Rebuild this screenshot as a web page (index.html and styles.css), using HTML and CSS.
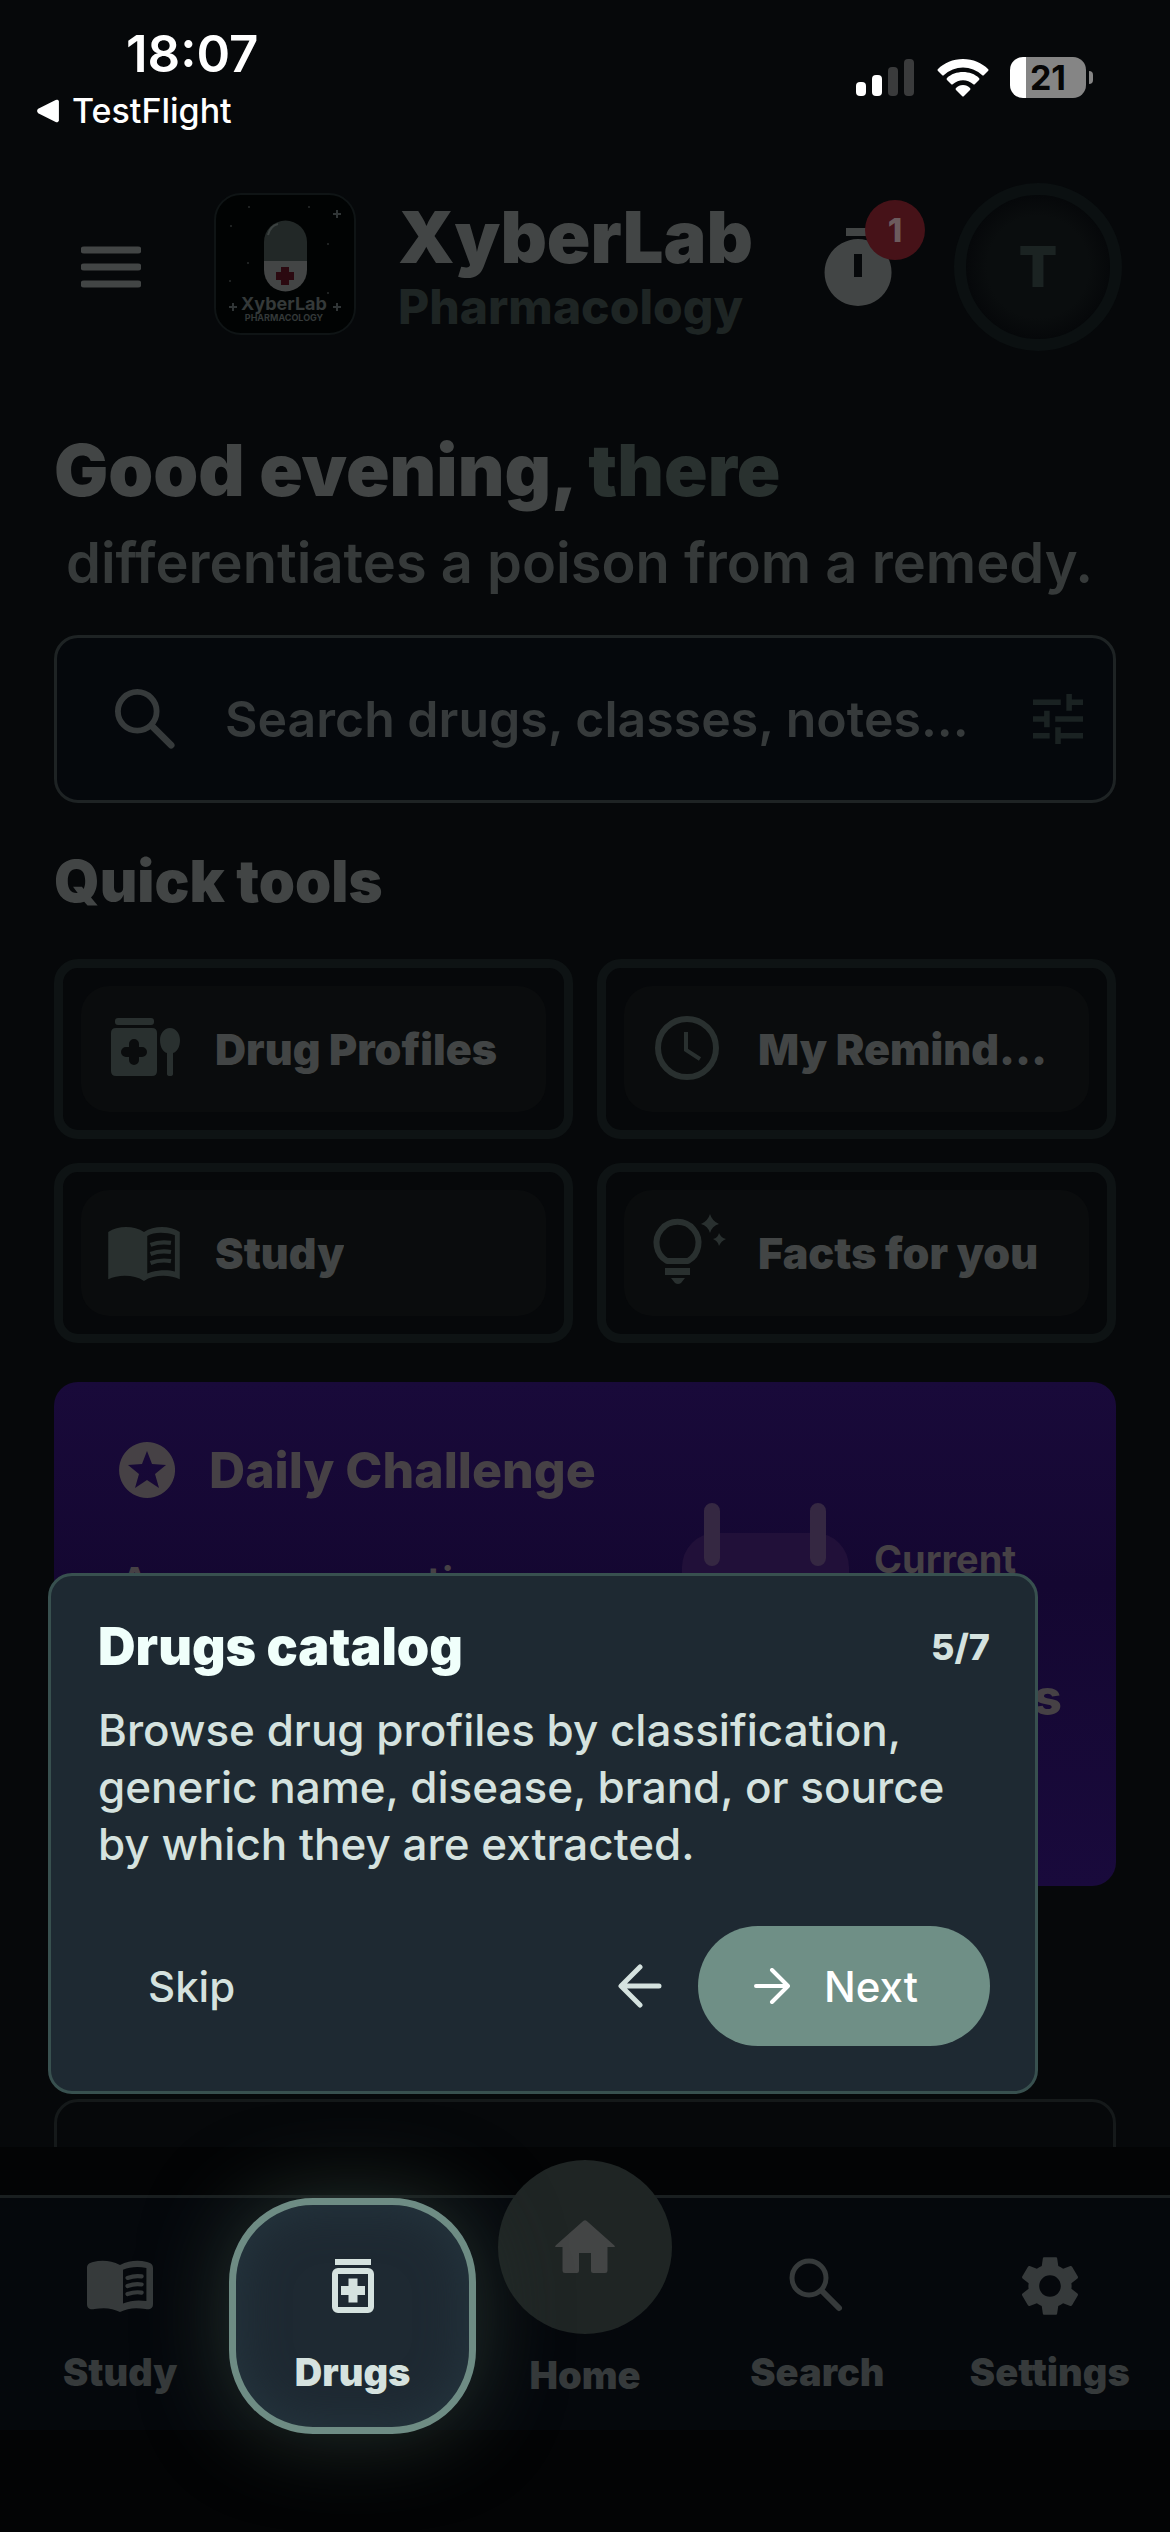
FILE: index.html
```html
<!DOCTYPE html>
<html lang="en">
<head>
  <meta charset="UTF-8">
  <meta name="viewport" content="width=device-width, initial-scale=1.0">
  <title>XyberLab Pharmacology</title>
  <link rel="stylesheet" href="styles.css">
</head>
<body>
  <div class="status-bar">
    <div class="status-left">
      <span class="clock">18:07</span>
      <a href="#" class="back-app">
        <svg width="24" height="24" viewBox="0 0 22 22"><path d="M21 2v18a2 2 0 0 1-3 1L2 13q-2-2 0-4L18 1a2 2 0 0 1 3 1z" fill="currentColor"/></svg>
        TestFlight
      </a>
    </div>
    <div class="status-right">
      <svg width="60" height="38" viewBox="0 0 60 38">
        <rect x="0" y="23" width="10" height="14" rx="4" fill="#fff"/>
        <rect x="16" y="16" width="10" height="21" rx="4" fill="#fff"/>
        <rect x="32" y="8" width="10" height="29" rx="4" fill="#3a3b3c"/>
        <rect x="48" y="0" width="10" height="37" rx="4" fill="#3a3b3c"/>
      </svg>
      <svg width="52" height="38" viewBox="0 0 52 38" fill="#fff">
        <path d="M26 0C16 0 7 4 1 10q-1 1 0 2l4 4q1 1 2 0a28 28 0 0 1 38 0q1 1 2 0l4-4q1-1 0-2C45 4 36 0 26 0z"/>
        <path d="M26 13c-6 0-12 2-16 6q-1 1 0 2l4 4q1 1 2 0a15 15 0 0 1 20 0q1 1 2 0l4-4q1-1 0-2c-4-4-10-6-16-6z"/>
        <path d="M26 26c-3 0-5 1-7 3q-1 1 0 2l6 6q1 1 2 0l6-6q1-1 0-2c-2-2-4-3-7-3z"/>
      </svg>
      <div class="battery"><span>21</span></div>
    </div>
  </div>

  <header class="app-bar">
    <button class="menu-btn" aria-label="Menu">
      <svg width="60" height="42" viewBox="0 0 60 42"><path d="M3 4h54M3 21h54M3 38h54" stroke="currentColor" stroke-width="7" stroke-linecap="round"/></svg>
    </button>
    <svg class="logo" width="142" height="142" viewBox="0 0 142 142">
      <rect x="1" y="1" width="140" height="140" rx="26" fill="#010303" stroke="#0f1415" stroke-width="2"/>
      <path d="M50 68V49a21 21 0 0 1 43 0v19z" fill="#222827"/>
      <path d="M50 68h43v9a21 21 0 0 1-43 0z" fill="#434545"/>
      <path d="M54 42q2-9 10-11" stroke="#3c4241" stroke-width="2" fill="none"/>
      <path d="M67 74h8v5h5v8h-5v5h-8v-5h-5v-8h5z" fill="#2b0910"/>
      <path d="M123 17v8M119 21h8M19 110v8M15 114h8M123 110v8M119 114h8" stroke="#303536" stroke-width="2"/>
      <g fill="#282c2c"><circle cx="35" cy="14" r="1"/><circle cx="95" cy="14" r="1"/><circle cx="17" cy="33" r="1"/><circle cx="114" cy="51" r="1"/><circle cx="34" cy="70" r="1"/><circle cx="16" cy="88" r="1"/><circle cx="114" cy="100" r="1"/></g>
      <text class="logo-name" x="70" y="117">XyberLab</text>
      <text class="logo-sub" x="70" y="128">PHARMACOLOGY</text>
    </svg>
    <div class="brand">
      <span class="brand-name">XyberLab</span>
      <span class="brand-sub">Pharmacology</span>
    </div>
    <button class="timer-btn" aria-label="Reminders">
      <svg width="68" height="80" viewBox="0 0 68 80"><path d="M22 1h24v8H22z" fill="currentColor"/><path fill-rule="evenodd" d="M34 12a33.500 33.500 0 1 0 .1 0zM30 27h8v23h-8z" fill="currentColor"/></svg>
      <span class="badge">1</span>
    </button>
    <button class="avatar">T</button>
  </header>

  <main>
    <h1>Good evening, <span>there</span></h1>
    <p class="quote">differentiates a poison from a remedy.</p>

    <div class="search-box">
      <svg width="60" height="60" viewBox="0 0 62 62"><circle cx="23" cy="23" r="20" fill="none" stroke="currentColor" stroke-width="6"/><path d="M38 38l20 20" stroke="currentColor" stroke-width="7" stroke-linecap="round"/></svg>
      <input type="text" placeholder="Search drugs, classes, notes..." aria-label="Search drugs, classes, notes">
      <button class="filter-btn" aria-label="Filters">
        <svg width="50" height="50" viewBox="3 3 18 18"><path fill="currentColor" d="M3 17v2h6v-2H3zM3 5v2h10V5H3zm10 16v-2h8v-2h-8v-2h-2v6h2zM7 9v2H3v2h4v2h2V9H7zm14 4v-2H11v2h10zm-6-4h2V7h4V5h-4V3h-2v6z"/></svg>
      </button>
    </div>

    <h2>Quick tools</h2>
    <div class="tools">
      <button class="tool"><span class="tool-inner">
        <svg width="78" height="78" viewBox="0 0 78 78"><rect x="10" y="8" width="39" height="7" rx="3" fill="currentColor"/><path fill="currentColor" d="M11 18h36q5 0 5 5v38q0 5-5 5H11q-5 0-5-5V23q0-5 5-5z"/><path d="M29 34v16M21 42h16" stroke="#0a0c0d" stroke-width="10" stroke-linecap="round"/><path fill="currentColor" d="M65 18c6 0 10 6 10 12 0 7-3 12-7 13v21q0 2-3 2t-3-2V43c-4-1-7-6-7-13 0-6 4-12 10-12z"/></svg>
        <span class="tool-label">Drug Profiles</span>
      </span></button>
      <button class="tool"><span class="tool-inner">
        <svg width="78" height="78" viewBox="0 0 78 78" fill="none" stroke="currentColor"><circle cx="39" cy="38" r="29" stroke-width="6"/><path d="M38 22v18l14 9" stroke-width="4"/></svg>
        <span class="tool-label">My Reminders</span>
      </span></button>
      <button class="tool"><span class="tool-inner">
        <svg width="78" height="78" viewBox="0 0 24 24"><path fill="currentColor" fill-rule="evenodd" d="M1 5.500C4 3.500 9 3.500 12 5.500c3-2 8-2 11 0v14.600c-3-1.500-8-1.500-11 .5-3-2-8-2-11-.5zM21.500 6.500c-3-1-6.500-1-8.500.3v11.500c2.500-1 6-1.300 8.500-.6z"/><path d="M14 9.500c2-.8 4-1 6.300-.6M14 12.300c2-.8 4-1 6.300-.6M14 15.100c2-.8 4-1 6.300-.6" fill="none" stroke="currentColor" stroke-width="1.300"/></svg>
        <span class="tool-label">Study</span>
      </span></button>
      <button class="tool"><span class="tool-inner">
        <svg width="78" height="78" viewBox="0 0 78 78"><path d="M19 47a21 21 0 1 1 21 0z" fill="none" stroke="currentColor" stroke-width="6" stroke-linejoin="round"/><path fill="currentColor" d="M17 54h25v7H17zM23 64h14l-4 5q-3 2-6 0zM62 0q2 7 9 10-7 2-9 9-2-7-9-9 7-3 9-10zM71 19q2 5 7 6-5 2-7 7-1-5-6-7 5-1 6-6z"/></svg>
        <span class="tool-label">Facts for you</span>
      </span></button>
    </div>

    <section class="challenge">
      <div class="challenge-info">
        <h3>
          <svg width="56" height="56" viewBox="0 0 56 56"><path fill="currentColor" fill-rule="evenodd" d="M28 0a28 28 0 1 0 .1 0zM28 9l5 13 14 1-11 9 4 14-12-8-12 8 4-14-11-9 14-1z"/></svg>
          Daily Challenge
        </h3>
        <p>Answer a question</p>
      </div>
      <svg class="calendar" width="168" height="200" viewBox="0 0 168 200"><rect x="0" y="30" width="167" height="160" rx="34" fill="#211039"/><path d="M30 8v47M136 8v47" stroke="#352842" stroke-width="16" stroke-linecap="round"/></svg>
      <div class="streak">
        <span>Current</span>
        <strong>0 days</strong>
      </div>
    </section>
    <section class="next-card"></section>
  </main>

  <nav class="tab-bar">
    <a href="#" class="tab">
      <svg width="72" height="72" viewBox="0 0 24 24"><path fill="currentColor" fill-rule="evenodd" d="M3 4c3-.7 6-.5 9 1 3-1.500 6-1.700 9-1 1.500.3 2 1 2 2v12c0 1.500-1 2-2.500 1.700-3-.6-6-.4-8.500 1-2.500-1.400-5.500-1.600-8.500-1C2 20 1 19.500 1 18V6c0-1 .5-1.700 2-2zM20.800 6c-3-.6-5.500-.3-7.800.6v11.200c2.500-1 5-1.200 7.800-.8z"/><path d="M14.500 9.300c1.700-.6 3-.8 4.700-.5M14.500 12c1.700-.6 3-.8 4.700-.5M14.500 14.700c1.700-.6 3-.8 4.700-.5" fill="none" stroke="currentColor" stroke-width="1.400" stroke-linecap="round"/></svg>
      <span>Study</span>
    </a>
    <a href="#" class="tab active">
      <svg width="72" height="72" viewBox="0 0 24 24"><path fill="currentColor" fill-rule="evenodd" d="M6 3h12v2H6zM7 6h10a2 2 0 0 1 2 2v11a2 2 0 0 1-2 2H7a2 2 0 0 1-2-2V8a2 2 0 0 1 2-2zm0 2v11h10V8zM10.500 9.500h3v2.500H16v3h-2.500v2.500h-3V15H8v-3h2.500z"/></svg>
      <span>Drugs</span>
    </a>
    <a href="#" class="tab home">
      <span class="home-circle">
        <svg width="72" height="72" viewBox="0 0 24 24"><path fill="currentColor" d="M10 20v-6h4v6q0 .7.700.7h4q.8 0 .8-.8V12h2.200q.5 0 0-.6L12.600 3.300q-.6-.5-1.200 0L2.300 11.400q-.5.6 0 .6h2.200v7.900q0 .8.800.8h4q.7 0 .7-.7z"/></svg>
      </span>
      <span>Home</span>
    </a>
    <a href="#" class="tab">
      <svg width="72" height="72" viewBox="0 0 72 72"><circle cx="28" cy="28" r="17" fill="none" stroke="currentColor" stroke-width="5"/><path d="M41 41l17 17" stroke="currentColor" stroke-width="6" stroke-linecap="round"/></svg>
      <span>Search</span>
    </a>
    <a href="#" class="tab">
      <svg width="72" height="72" viewBox="0 0 24 24"><path fill="currentColor" d="M19.140 12.940c.04-.3.060-.61.060-.94 0-.32-.02-.64-.07-.94l2.030-1.580c.18-.14.230-.41.120-.61l-1.920-3.320c-.12-.22-.37-.29-.59-.22l-2.390.960c-.5-.38-1.030-.7-1.620-.94l-.36-2.540c-.04-.24-.24-.41-.48-.41h-3.840c-.24 0-.43.170-.47.410l-.36 2.540c-.59.240-1.130.570-1.620.94l-2.390-.96c-.22-.08-.47 0-.59.220L2.740 8.870c-.12.210-.08.470.120.610l2.030 1.580c-.05.3-.09.630-.09.940s.02.640.070.940l-2.030 1.580c-.18.140-.23.410-.12.610l1.920 3.320c.12.220.37.290.59.220l2.390-.96c.5.380 1.030.7 1.620.94l.36 2.540c.05.240.24.410.48.410h3.840c.24 0 .44-.17.470-.41l.36-2.540c.59-.24 1.130-.56 1.620-.94l2.390.960c.22.080.47 0 .59-.22l1.920-3.320c.12-.22.070-.47-.12-.61l-2.010-1.580zM12 15.600c-1.980 0-3.600-1.620-3.600-3.600s1.620-3.600 3.600-3.600 3.600 1.620 3.600 3.600-1.620 3.600-3.600 3.600z"/></svg>
      <span>Settings</span>
    </a>
  </nav>

  <!-- guided tour step -->
  <div class="tour" role="dialog" aria-labelledby="tourTitle">
    <div class="tour-head">
      <h4 id="tourTitle">Drugs catalog</h4>
      <span class="tour-step">5/7</span>
    </div>
    <p>Browse drug profiles by classification, generic name, disease, brand, or source by which they are extracted.</p>
    <div class="tour-actions">
      <button class="skip-btn">Skip</button>
      <button class="prev-btn" aria-label="Previous">
        <svg width="44" height="44" viewBox="0 0 44 44"><path d="M41 22H4M22 3L3 22l19 19" fill="none" stroke="currentColor" stroke-width="5" stroke-linecap="round" stroke-linejoin="round"/></svg>
      </button>
      <button class="next-btn">
        <svg width="36" height="36" viewBox="0 0 36 36"><path d="M2 18h31M18 2l16 16-16 16" fill="none" stroke="currentColor" stroke-width="4" stroke-linecap="round" stroke-linejoin="round"/></svg>
        Next
      </button>
    </div>
  </div>
</body>
</html>
```
FILE: styles.css
```css
* {
  box-sizing: border-box;
}

body {
  margin: 0;
  min-height: 100vh;
  background: #06080a;
  color: #424545;
  font-family: Inter, "Liberation Sans", sans-serif;
  display: flex;
  flex-direction: column;
  position: relative;
  overflow-x: hidden;
}

h1, h2, h3, h4, p {
  margin: 0;
}

button {
  font: inherit;
  color: inherit;
  background: none;
  border: 0;
  padding: 0;
}

a {
  color: inherit;
  text-decoration: none;
}

svg {
  display: block;
  flex-shrink: 0;
}

/* Status bar */
.status-bar {
  display: flex;
  justify-content: space-between;
  align-items: flex-start;
  height: 156px;
  padding: 24px 84px 0 36px;
  color: #fff;
}

.status-left {
  display: flex;
  flex-direction: column;
}

.clock {
  font-size: 51px;
  line-height: 60px;
  font-weight: 600;
  padding-left: 90px;
}

.back-app {
  display: flex;
  align-items: center;
  gap: 12px;
  font-size: 34px;
  line-height: 54px;
  font-weight: 500;
}

.status-right {
  display: flex;
  align-items: center;
  gap: 21px;
  padding-top: 33px;
}

.battery {
  position: relative;
  width: 76px;
  height: 41px;
  border-radius: 13px;
  background: linear-gradient(90deg, #fff 21%, #858585 21%);
  color: #060606;
  font-size: 34px;
  line-height: 41px;
  font-weight: 700;
  text-align: center;
}

.battery::after {
  content: "";
  position: absolute;
  right: -7px;
  top: 14px;
  width: 4px;
  height: 13px;
  border-radius: 0 4px 4px 0;
  background: #858585;
}

/* App bar */
.app-bar {
  display: flex;
  align-items: center;
  height: 222px;
  padding: 0 48px 0 81px;
}

.logo {
  margin: 0 42px 6px 73px;
}

.logo-name {
  font-size: 18px;
  font-weight: 700;
  fill: #343939;
  text-anchor: middle;
}

.logo-sub {
  font-size: 9px;
  font-weight: 700;
  fill: #343939;
  text-anchor: middle;
}

.brand {
  flex: 1;
  display: flex;
  flex-direction: column;
  min-width: 0;
}

.brand-name {
  font-size: 72px;
  line-height: 80px;
  font-weight: 900;
}

.brand-sub {
  font-size: 48px;
  line-height: 60px;
  font-weight: 800;
  color: #1e2524;
}

.timer-btn {
  position: relative;
  margin-right: 62px;
}

.badge {
  position: absolute;
  top: -27px;
  right: -33px;
  width: 60px;
  height: 60px;
  border-radius: 50%;
  background: #461218;
  color: #6c5b5d;
  font-size: 33px;
  line-height: 60px;
  font-weight: 800;
}

.avatar {
  width: 168px;
  height: 168px;
  border: 12px solid #0b1011;
  border-radius: 50%;
  background: radial-gradient(#0a0d0e 50%, #06080a 70%);
  color: #1b2322;
  font-size: 56px;
  font-weight: 900;
}

/* Home content */
main {
  flex: 1 0 0;
  height: 0;
  padding: 48px 54px 0;
  margin-bottom: 48px;
  overflow: hidden;
}

h1 {
  font-size: 72px;
  line-height: 88px;
  font-weight: 900;
}

h1 span {
  color: #29312f;
}

.quote {
  margin: 15px 0 38px;
  padding-left: 12px;
  font-size: 56px;
  line-height: 68px;
  font-weight: 600;
  color: #363a3a;
  white-space: nowrap;
  overflow: hidden;
}

.search-box {
  display: flex;
  align-items: center;
  height: 168px;
  padding: 0 30px 0 58px;
  border: 3px solid #1e2324;
  border-radius: 24px;
  background: #05080c;
  color: #363a3b;
}

.search-box input {
  flex: 1;
  min-width: 0;
  padding: 0 0 0 50px;
  border: 0;
  background: none;
  font: 600 50px/60px Inter, "Liberation Sans", sans-serif;
}

.search-box input::placeholder {
  color: #363a3b;
  opacity: 1;
}

.filter-btn {
  color: #1a2222;
}

h2 {
  margin: 42px 0;
  font-size: 58px;
  line-height: 72px;
  font-weight: 900;
}

.tools {
  display: grid;
  grid-template-columns: 1fr 1fr;
  gap: 24px;
}

.tool {
  min-width: 0;
  padding: 18px;
  border: 9px solid #0e1314;
  border-radius: 24px;
  text-align: left;
}

.tool-inner {
  display: flex;
  align-items: center;
  gap: 32px;
  height: 126px;
  padding: 0 24px;
  border-radius: 28px;
  background: #0a0c0d;
  color: #29302f;
}

.tool-label {
  font-size: 43px;
  line-height: 54px;
  font-weight: 900;
  color: #424545;
  white-space: nowrap;
  overflow: hidden;
  text-overflow: ellipsis;
}

.challenge {
  display: flex;
  height: 504px;
  margin-top: 39px;
  padding: 56px 54px 0 65px;
  border-radius: 24px;
  background: linear-gradient(#190a3a, #140731 40%, #190a3c);
  color: #464145;
}

.challenge-info {
  flex: 1;
  min-width: 0;
}

.challenge h3 {
  display: flex;
  align-items: center;
  gap: 34px;
  font-size: 50px;
  line-height: 64px;
  font-weight: 800;
  white-space: nowrap;
}

.challenge p {
  margin-top: 50px;
  font-size: 43px;
  line-height: 60px;
  font-weight: 600;
  white-space: nowrap;
}

.calendar {
  margin: 65px 24px 0 0;
}

.streak {
  display: flex;
  flex-direction: column;
  width: 188px;
  padding-top: 97px;
  font-size: 38px;
  line-height: 48px;
  font-weight: 700;
}

.streak strong {
  margin-top: 82px;
  font-size: 50px;
  line-height: 64px;
  font-weight: 800;
  text-align: right;
  white-space: nowrap;
}

.next-card {
  height: 240px;
  margin-top: 213px;
  border: 3px solid #15191a;
  border-radius: 24px;
}

/* Bottom tabs */
.tab-bar {
  display: grid;
  grid-template-columns: repeat(5, 1fr);
  height: 235px;
  margin-bottom: 102px;
  padding: 0 4px;
  border-top: 3px solid #1a1f20;
  background: #05080c;
  box-shadow: 0 102px 0 #030405, 0 -48px 0 #030405;
  color: #363a3b;
}

.tab {
  display: flex;
  flex-direction: column;
  align-items: center;
  gap: 26px;
  padding-top: 52px;
  font-size: 38px;
  line-height: 48px;
  font-weight: 900;
}

/* spotlight on the highlighted tab */
.active {
  position: relative;
  z-index: 1;
  margin: 0 -7px -4px;
  padding-top: 45px;
  border: 7px solid #6e8c84;
  border-radius: 84px;
  background: #1e2932;
  box-shadow: 0 0 84px #26332f, inset 0 0 48px #263740;
  color: #d5e2df;
}

.home {
  gap: 17px;
  padding: 0;
}

.home-circle {
  display: flex;
  align-items: center;
  justify-content: center;
  width: 174px;
  height: 174px;
  margin-top: -38px;
  border-radius: 50%;
  background: #1f2524;
  color: #434545;
}

/* Tour popup */
.tour {
  position: absolute;
  left: 48px;
  right: 132px;
  bottom: 438px;
  padding: 41px 45px 45px 47px;
  border: 3px solid #38504f;
  border-radius: 24px;
  background: #1e2932;
  color: #d5e2df;
}

.tour-head {
  display: flex;
  justify-content: space-between;
  align-items: center;
}

.tour h4 {
  font-size: 52px;
  line-height: 60px;
  font-weight: 900;
  color: #f0fffb;
}

.tour-step {
  font-size: 36px;
  font-weight: 800;
}

.tour p {
  margin: 25px 0 53px;
  padding-right: 12px;
  font-size: 44px;
  line-height: 57px;
  font-weight: 500;
}

.tour-actions {
  display: flex;
  align-items: center;
  font-size: 42px;
  font-weight: 500;
}

.skip-btn {
  margin-right: auto;
  padding-left: 50px;
}

.next-btn {
  display: flex;
  align-items: center;
  gap: 34px;
  height: 120px;
  margin-left: 36px;
  padding: 0 72px 0 56px;
  border-radius: 60px;
  background: #6f8f86;
  color: #fff;
}
```
